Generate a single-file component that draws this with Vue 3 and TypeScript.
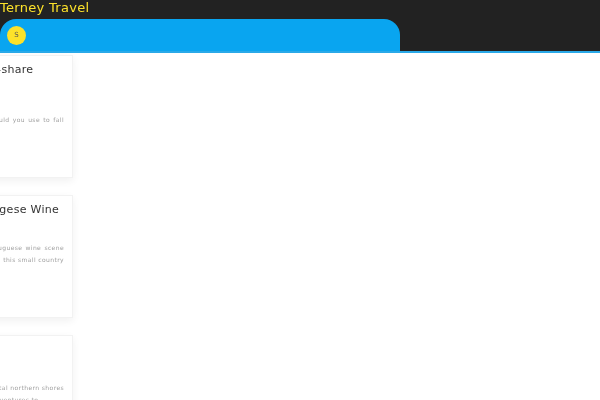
<script setup lang="ts">
interface Card {
  title: string
  lines: string[]
  lastFull?: boolean
}

const cards: Card[] = [
  { title: 'Time-share', lines: ['', 'What would you use to fall'], lastFull: true },
  { title: 'Portugese Wine', lines: ['The Portuguese wine scene', 'Explored, this small country'], lastFull: true },
  { title: '', lines: ['The coastal northern shores', 'of our adventures to'] },
]
</script>

<template>
  <div class="page">
    <header class="header">
      <div class="brand">Terney Travel</div>
      <div class="tab">
        <span class="badge">S</span>
      </div>
    </header>
    <main class="list">
      <article v-for="(card, i) in cards" :key="i" class="card" :class="{ full: card.lastFull }">
        <h3 class="title">{{ card.title }}</h3>
        <p class="text">
          <span v-for="(line, n) in card.lines" :key="n" class="line">{{ line || '\u00a0' }}</span>
        </p>
      </article>
    </main>
  </div>
</template>

<style>
html, body {
  margin: 0;
  background: #fff;
  overflow: hidden;
}
</style>

<style scoped>
.page {
  width: 600px;
  height: 400px;
  overflow: hidden;
  font-family: "DejaVu Sans", Verdana, sans-serif;
}

.header {
  height: 51px;
  background: #222;
  border-bottom: 2px solid #2aa9e8;
  will-change: transform;
}

.brand {
  height: 19px;
  line-height: 15px;
  color: #fde22a;
  font-size: 13px;
  letter-spacing: 0.3px;
  white-space: nowrap;
}

.tab {
  width: 400px;
  height: 32px;
  background: #09a5f0;
  border-radius: 16px 16px 0 0;
  display: flex;
  align-items: center;
  padding-left: 7px;
  box-sizing: border-box;
}

.badge {
  width: 19px;
  height: 19px;
  border-radius: 50%;
  background: #fde22a;
  color: #555;
  font-size: 7px;
  display: flex;
  align-items: center;
  justify-content: center;
}

.list {
  display: flex;
  flex-direction: column;
  gap: 17px;
  margin-left: -40px;
  width: 113px;
  margin-top: 2px;
  will-change: transform;
}

.card {
  height: 123px;
  flex: none;
  box-sizing: border-box;
  background: #fff;
  border: 1px solid #f2f2f2;
  box-shadow: 0 3px 8px rgba(0, 0, 0, 0.06);
  padding: 7px 8px 8px;
}

.title {
  margin: 0;
  height: 38px;
  font-size: 11px;
  font-weight: 400;
  line-height: 14px;
  letter-spacing: 0.3px;
  color: #333;
  white-space: nowrap;
}

.text {
  margin: 0;
  color: #a0a0a0;
  font-size: 6px;
  letter-spacing: 0.4px;
  line-height: 12px;
  padding-top: 1px;
}

.line {
  display: block;
  white-space: nowrap;
  text-align: justify;
  text-align-last: justify;
}

.line:last-child {
  text-align-last: left;
}

.full .line:last-child {
  text-align-last: justify;
}
</style>
